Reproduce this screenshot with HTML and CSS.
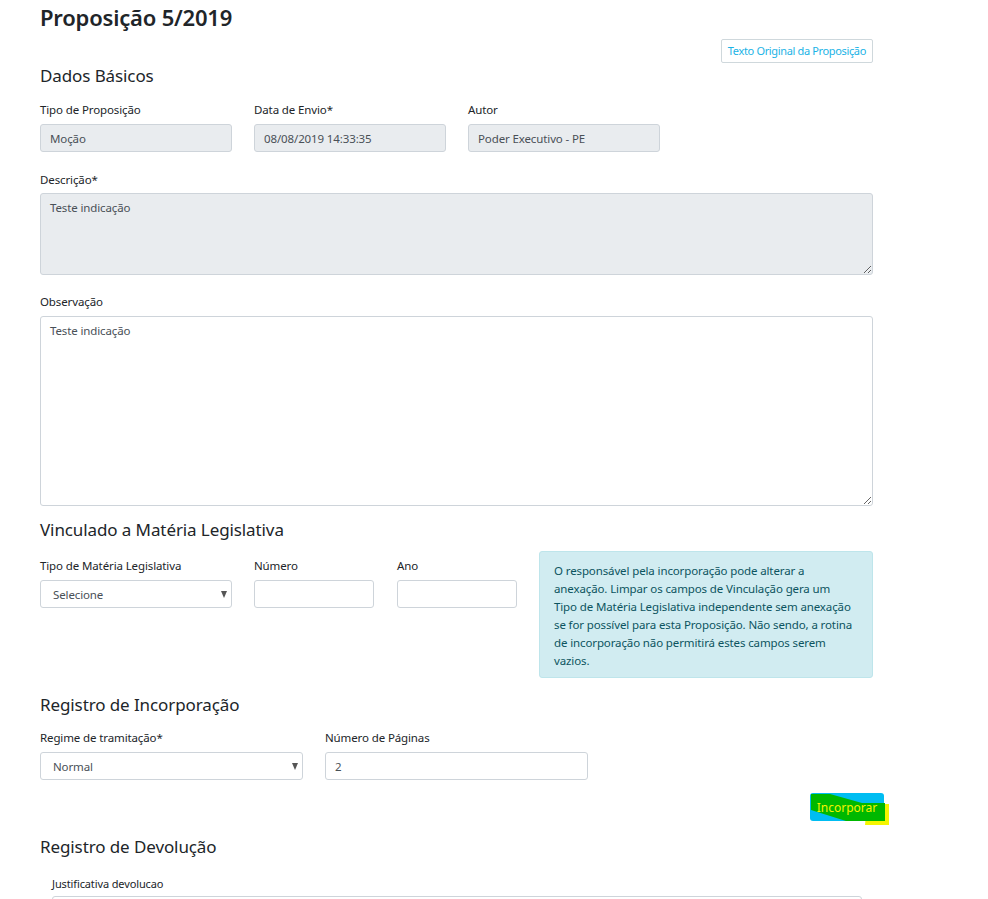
FILE: index.html
```html
<!doctype html>
<html lang="pt-BR">
    <head>
        <meta charset="UTF-8" />
        <title>Proposição 5/2019</title>
        <link rel="stylesheet" href="styles.css">
    </head>
    <body>
        <div class="page">
            <h1 class="title">Proposição 5/2019</h1>

            <div class="top-actions">
                <a class="btn-outline" href="#">Texto Original da Proposição</a>
            </div>

            <h2>Dados Básicos</h2>
            <div class="row row-basic">
                <div class="field">
                    <label>Tipo de Proposição</label>
                    <input class="input" type="text" value="Moção" readonly />
                </div>
                <div class="field">
                    <label>Data de Envio*</label>
                    <input class="input" type="text" value="08/08/2019 14:33:35" readonly />
                </div>
                <div class="field">
                    <label>Autor</label>
                    <input class="input" type="text" value="Poder Executivo - PE" readonly />
                </div>
            </div>

            <div class="field field-desc">
                <label>Descrição*</label>
                <textarea class="input area-desc" readonly>Teste indicação</textarea>
            </div>

            <div class="field field-obs">
                <label>Observação</label>
                <textarea class="input area-obs">Teste indicação</textarea>
            </div>

            <h2 class="h-vinc">Vinculado a Matéria Legislativa</h2>
            <div class="row row-vinc">
                <div class="field field-tipo">
                    <label>Tipo de Matéria Legislativa</label>
                    <div class="select-wrap">
                        <select class="input select">
                            <option>Selecione</option>
                        </select>
                    </div>
                </div>
                <div class="field field-num">
                    <label>Número</label>
                    <input class="input" type="text" />
                </div>
                <div class="field field-ano">
                    <label>Ano</label>
                    <input class="input" type="text" />
                </div>
                <div class="alert">
                    O responsável pela incorporação pode alterar a<br>
                    anexação. Limpar os campos de Vinculação gera um<br>
                    Tipo de Matéria Legislativa independente sem anexação<br>
                    se for possível para esta Proposição. Não sendo, a rotina<br>
                    de incorporação não permitirá estes campos serem<br>
                    vazios.
                </div>
            </div>

            <h2 class="h-inc">Registro de Incorporação</h2>
            <div class="row row-inc">
                <div class="field">
                    <label>Regime de tramitação*</label>
                    <div class="select-wrap">
                        <select class="input select">
                            <option>Normal</option>
                        </select>
                    </div>
                </div>
                <div class="field">
                    <label>Número de Páginas</label>
                    <input class="input" type="text" value="2" />
                </div>
            </div>

            <div class="actions">
                <button class="btn-primary">
                    <svg class="marker" width="80" height="34" viewBox="0 0 80 34">
                        <polygon points="57,11 79,11 79,32 55,32" fill="#f5f500" />
                        <polygon points="1,1 20,1 52,10 75,10 75,28 36,28 1,17" fill="#00b800" />
                    </svg>
                    <span>Incorporar</span>
                </button>
            </div>

            <h2 class="h-dev">Registro de Devolução</h2>
            <div class="devolucao">
                <label class="label-small">Justificativa devolucao</label>
                <textarea class="input area-dev"></textarea>
            </div>
        </div>
    </body>
</html>
```

FILE: styles.css
```css
body {
    margin: 0;
    background: #fff;
    color: #212529;
    font-family: "Noto Sans", "Open Sans", sans-serif;
    font-size: 11.5px;
    letter-spacing: -0.12px;
}

.page {
    width: 833px;
    margin-left: 40px;
    padding-top: 4px;
}

.title {
    margin: 0;
    font-size: 22px;
    font-weight: 600;
    line-height: 26px;
    letter-spacing: -0.2px;
}

.top-actions {
    display: flex;
    justify-content: flex-end;
    margin-top: 9px;
}

.btn-outline {
    display: inline-block;
    padding: 4px 6px;
    border: 1px solid #cfd8dc;
    border-radius: 2px;
    color: #1ab3e6;
    font-size: 11px;
    line-height: 14px;
    text-decoration: none;
    letter-spacing: -0.35px;
}

h2 {
    margin: 2px 0 0;
    font-size: 17px;
    font-weight: 400;
    line-height: 22px;
    letter-spacing: -0.1px;
}

label {
    display: block;
    margin-bottom: 5px;
    line-height: 18px;
}

.row {
    display: flex;
    gap: 22px;
}

.row-basic {
    margin-top: 14px;
}

.row-basic .field {
    width: 192px;
}

.input {
    display: block;
    box-sizing: border-box;
    width: 100%;
    height: 28px;
    padding: 0 9px;
    border: 1px solid #ced4da;
    border-radius: 3px;
    background: #fff;
    color: #495057;
    font-family: inherit;
    font-size: 11.5px;
    letter-spacing: -0.12px;
}

.input[readonly] {
    background: #e9ecef;
}

.input:focus {
    outline: none;
}

textarea.input {
    padding: 6px 9px;
    line-height: 16px;
    resize: vertical;
}

.field-desc {
    margin-top: 19px;
}

.field-desc label {
    margin-bottom: 4px;
}

.area-desc {
    height: 82px;
}

.field-obs {
    margin-top: 18px;
}

.area-obs {
    height: 190px;
    background: #fff !important;
}

.h-vinc {
    margin-top: 13px;
}

.row-vinc {
    margin-top: 10px;
    align-items: flex-start;
}

.row-vinc .field {
    padding-top: 6px;
}

.field-tipo {
    width: 192px;
}

.field-num,
.field-ano {
    width: 120px;
}

.row-vinc .field-ano {
    margin-left: 1px;
}

.alert {
    box-sizing: border-box;
    width: 334px;
    margin-left: auto;
    padding: 10px 10px 7px 14px;
    border: 1px solid #bee5eb;
    border-radius: 3px;
    background: #d1ecf1;
    color: #0c5460;
    line-height: 18px;
    white-space: nowrap;
}

.select-wrap {
    position: relative;
}

.select-wrap::after {
    content: "";
    position: absolute;
    right: 5px;
    top: 11px;
    border-left: 3.5px solid transparent;
    border-right: 3.5px solid transparent;
    border-top: 7px solid #555;
}

.select {
    appearance: none;
    padding-left: 12px;
}

.h-inc {
    margin-top: 16px;
}

.row-inc {
    margin-top: 13px;
}

.row-inc .field {
    width: 263px;
}

.actions {
    display: flex;
    justify-content: flex-end;
    margin-top: 13px;
    margin-right: -11px;
}

.btn-primary {
    position: relative;
    width: 74px;
    height: 28px;
    padding: 0;
    border: none;
    border-radius: 3px;
    background: #00bdf2;
    color: #f3f300;
    font-family: inherit;
    font-size: 12px;
}

.btn-primary .marker {
    position: absolute;
    left: 0;
    top: 0;
}

.btn-primary span {
    position: relative;
}

.h-dev {
    margin-top: 15px;
}

.devolucao {
    margin-top: 17px;
    padding: 0 11px 0 12px;
}

.label-small {
    font-size: 11px;
    margin-bottom: 3px;
}

.area-dev {
    height: 60px;
}
```
